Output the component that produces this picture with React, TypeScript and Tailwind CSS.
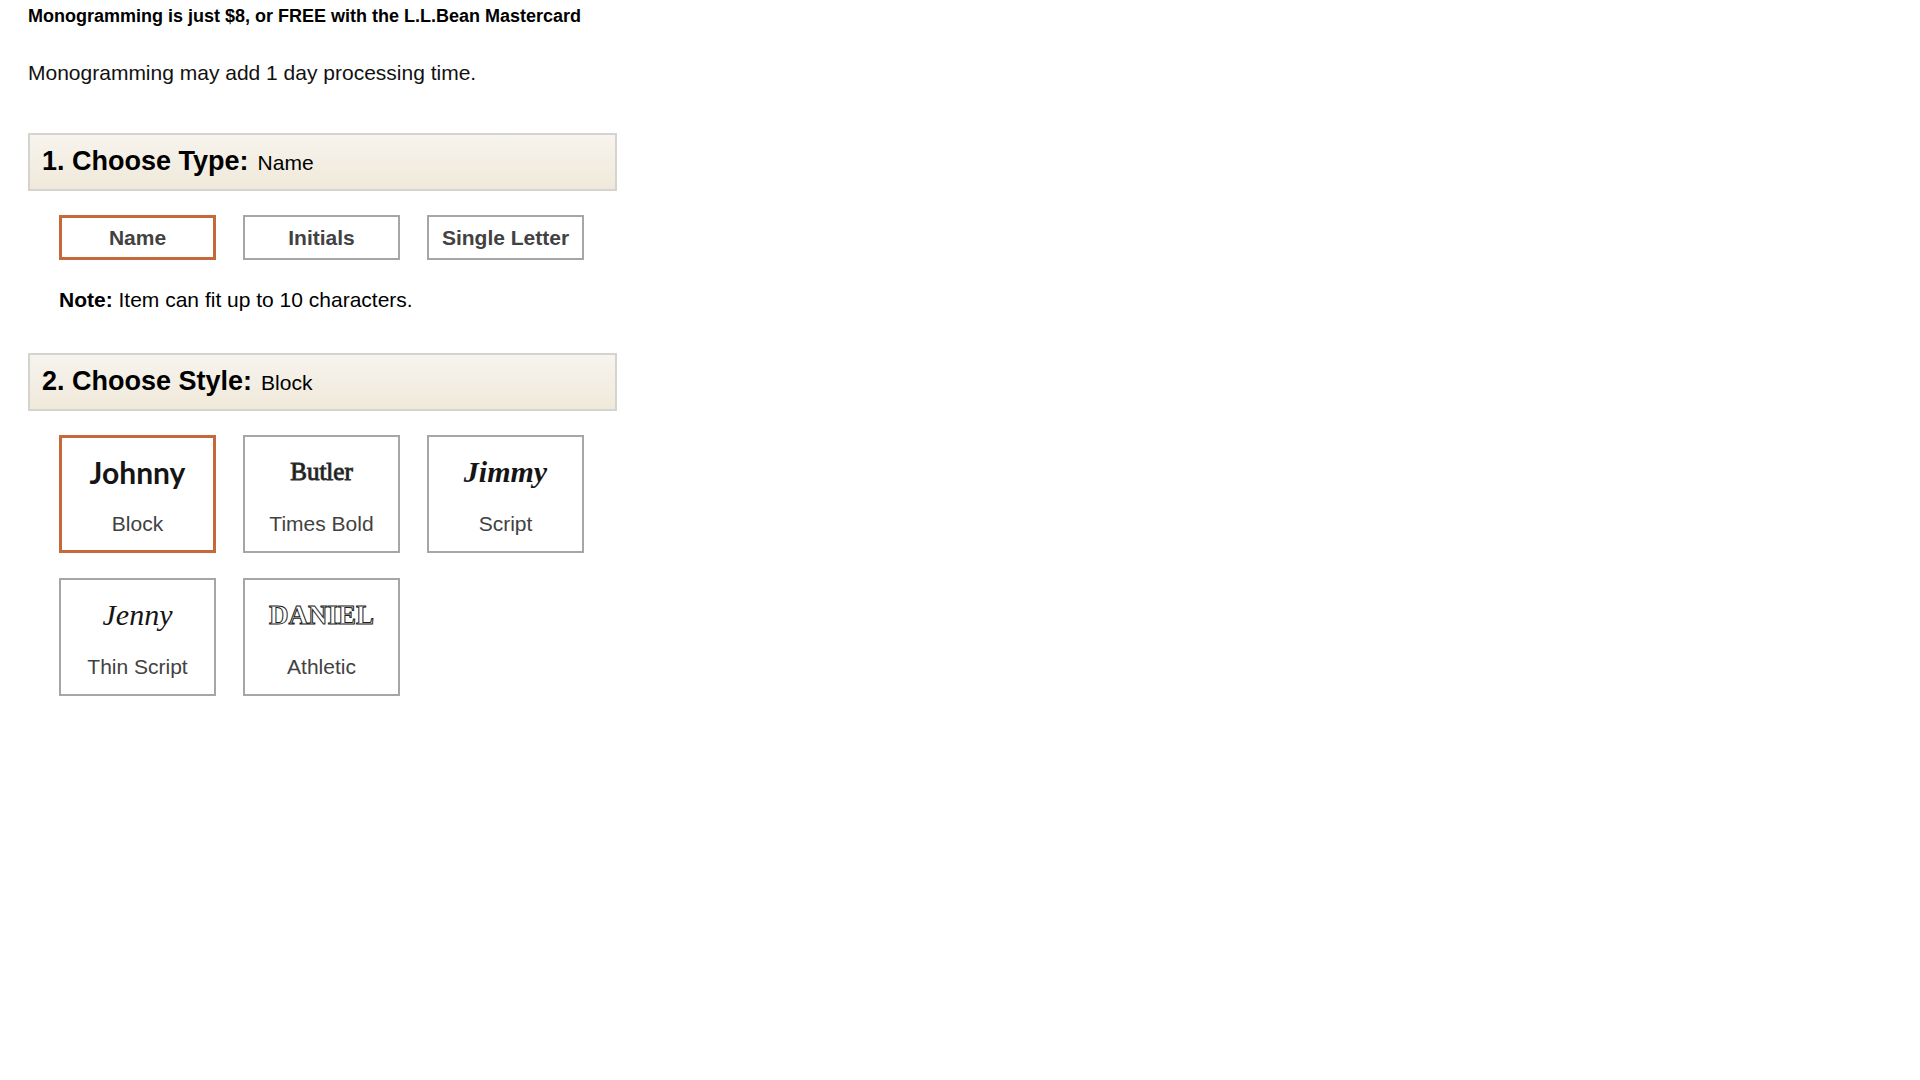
import { useState } from 'react';
import clsx from 'clsx';

const types = ['Name', 'Initials', 'Single Letter'];

const styles = [
  { name: 'Block', sample: 'Johnny', sampleClass: "font-['Lato',sans-serif] font-bold text-[30px]" },
  {
    name: 'Times Bold',
    sample: 'Butler',
    sampleClass: "font-['Liberation_Serif',serif] text-[25px] [-webkit-text-stroke:1px_#333333]",
  },
  { name: 'Script', sample: 'Jimmy', sampleClass: "font-['Liberation_Serif',serif] font-bold italic text-[30px]" },
  { name: 'Thin Script', sample: 'Jenny', sampleClass: "font-['Liberation_Serif',serif] italic text-[30px]" },
  {
    name: 'Athletic',
    sample: 'DANIEL',
    sampleClass:
      "font-['Liberation_Serif',serif] font-bold text-[27px] text-white [-webkit-text-stroke:1px_#222222]",
  },
];

interface SectionHeaderProps {
  title: string;
  value: string;
}

function SectionHeader({ title, value }: SectionHeaderProps) {
  return (
    <div className="flex h-[58px] items-baseline gap-[9px] border-2 border-[#d3d3d0] bg-linear-to-b from-[#f7f4ee] to-[#f0e9da] px-3 pt-[9px]">
      <h2 className="text-[27px] leading-[34px] font-bold">{title}</h2>
      <span className="text-[21px] leading-[34px]">{value}</span>
    </div>
  );
}

interface OptionButtonProps {
  selected: boolean;
  className: string;
  onClick: () => void;
  children: React.ReactNode;
}

function OptionButton({ selected, className, onClick, children }: OptionButtonProps) {
  return (
    <button
      type="button"
      aria-pressed={selected}
      onClick={onClick}
      className={clsx(
        'flex flex-col items-center justify-center whitespace-nowrap bg-white text-[21px] text-[#424242] cursor-pointer',
        selected ? 'border-3 border-[#c4693a]' : 'border-2 border-[#a6a6a6]',
        className
      )}
    >
      {children}
    </button>
  );
}

export default function App() {
  const [type, setType] = useState('Name');
  const [style, setStyle] = useState('Block');

  return (
    <main className="mx-7 max-w-[589px] pt-1 pb-7 font-['Liberation_Sans',Arial,sans-serif] text-black">
      <p className="text-[18px] leading-6 font-bold">
        Monogramming is just $8, or FREE with the L.L.Bean Mastercard
      </p>
      <p className="mt-[33px] text-[21px] leading-6 text-[#111111]">Monogramming may add 1 day processing time.</p>

      <section className="mt-12">
        <SectionHeader title="1. Choose Type:" value={type} />
        <div className="mt-6 grid grid-cols-3 gap-x-[27px] pr-[33px] pl-[31px]">
          {types.map((name) => (
            <OptionButton key={name} selected={name === type} className="h-[45px] font-bold" onClick={() => setType(name)}>
              {name}
            </OptionButton>
          ))}
        </div>
        <p className="mt-7 pl-[31px] text-[21px] leading-6">
          <strong>Note:</strong> Item can fit up to 10 characters.
        </p>
      </section>

      <section className="mt-[41px]">
        <SectionHeader title="2. Choose Style:" value={style} />
        <div className="mt-6 grid grid-cols-3 gap-x-[27px] gap-y-[25px] pr-[33px] pl-[31px]">
          {styles.map(({ name, sample, sampleClass }) => (
            <OptionButton key={name} selected={name === style} className="h-[118px]" onClick={() => setStyle(name)}>
              <span className={clsx('h-10 leading-10', name !== 'Athletic' && 'text-[#151515]', sampleClass)}>
                {sample}
              </span>
              <span className="mt-5 leading-6">{name}</span>
            </OptionButton>
          ))}
        </div>
      </section>
    </main>
  );
}
